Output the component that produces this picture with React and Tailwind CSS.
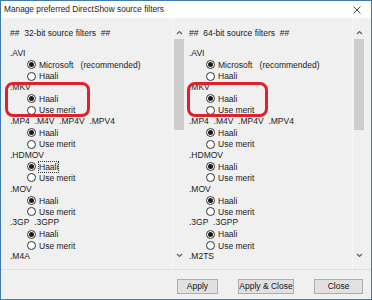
import React from "react";

const groups = [
  { ext: ".AVI", opts: [["Microsoft\u00a0\u00a0\u00a0(recommended)", true], ["Haali", false]] },
  { ext: ".MKV", opts: [["Haali", true], ["Use merit", false]] },
  { ext: ".MP4\u00a0\u00a0.M4V\u00a0\u00a0.MP4V\u00a0\u00a0.MPV4", opts: [["Haali", true], ["Use merit", false]] },
  { ext: ".HDMOV", opts: [["Haali", true, true], ["Use merit", false]] },
  { ext: ".MOV", opts: [["Haali", true], ["Use merit", false]] },
  { ext: ".3GP\u00a0\u00a0.3GPP", opts: [["Haali", true], ["Use merit", false]] },
];

function Radio({ checked }) {
  return (
    <span className="flex items-center justify-center w-[9px] h-[9px] rounded-full border border-[#333] bg-white shrink-0">
      {checked && <span className="w-[5px] h-[5px] rounded-full bg-[#1a1a1a]" />}
    </span>
  );
}

function Chevron({ up }) {
  return (
    <svg width="7" height="5" viewBox="0 0 7 5">
      <path d={up ? "M1 4 L3.5 1.5 L6 4" : "M1 1 L3.5 3.5 L6 1"} fill="none" stroke="#606060" strokeWidth="1.2" />
    </svg>
  );
}

function Scrollbar() {
  return (
    <div className="w-[13px] flex flex-col pt-[8px] pb-[7px] border-l border-[#f8f8f8]">
      <div className="h-[13px] flex items-center justify-center"><Chevron up /></div>
      <div className="flex-1 px-[1px]">
        <div className="h-[91px] bg-[#cdcdcd]" />
      </div>
      <div className="h-[13px] flex items-center justify-center"><Chevron /></div>
    </div>
  );
}

function Panel({ title, last, focus, padL }) {
  return (
    <div className="flex h-full">
      <div className={`flex-1 pt-[9px] ${padL}`}>
        <div className="h-[12px] leading-[12px] whitespace-pre">{title}</div>
        <div className="mt-[9px] flex flex-col">
          {groups.map((g, i) => (
            <React.Fragment key={i}>
              <div className="h-[11.3px] leading-[11.3px] whitespace-nowrap">{g.ext}</div>
              {g.opts.map(([label, checked, f], j) => (
                <div key={j} className="h-[11.3px] flex items-center pl-[17px] gap-[3px] whitespace-nowrap">
                  <Radio checked={checked} />
                  <span className={`leading-[10px] ${f && focus ? "outline outline-1 outline-dotted outline-[#333]" : ""}`}>{label}</span>
                </div>
              ))}
            </React.Fragment>
          ))}
          <div className="h-[11.3px] leading-[11.3px]">{last}</div>
        </div>
      </div>
      <Scrollbar />
    </div>
  );
}

function Button({ children, w }) {
  return (
    <div className={`${w} h-[15px] flex items-center justify-center bg-[#e1e1e1] border border-[#adadad] text-[#111]`}>
      {children}
    </div>
  );
}

export default function App() {
  return (
    <div className="w-[372px] h-[300px] border border-[#3d7bb0] bg-[#f0f0f0] flex flex-col text-[8.5px] text-[#1a1a1a] font-['Liberation_Sans',Arial,sans-serif] relative overflow-hidden">
      <div className="h-[17px] bg-white flex items-center justify-between pl-[3px] pr-[10px] shrink-0">
        <span className="text-[8.3px] text-[#222]">Manage preferred DirectShow source filters</span>
        <svg width="8" height="8" viewBox="0 0 8 8">
          <path d="M0.5 0.5 L7.5 7.5 M7.5 0.5 L0.5 7.5" stroke="#333" strokeWidth="0.9" />
        </svg>
      </div>
      <div className="flex h-[251px] shrink-0">
        <div className="w-[184px]">
          <Panel title={"##\u00a0\u00a032-bit source filters\u00a0\u00a0##"} last=".M4A" focus padL="pl-[9px]" />
        </div>
        <div className="w-[180px]">
          <Panel title={"##\u00a0\u00a064-bit source filters\u00a0\u00a0##"} last=".M2TS" padL="pl-[4px]" />
        </div>
      </div>
      <div className="flex-1 border-t border-[#dfdfdf] flex items-start pt-[9px] pl-[176px] gap-[20px]">
        <Button w="w-[41px]">Apply</Button>
        <Button w="w-[56px]">Apply &amp; Close</Button>
        <Button w="w-[49px]">Close</Button>
      </div>
      <div className="absolute left-[4px] top-[81px] w-[85px] h-[35px] rounded-[8px] border-[3px] border-[#e0202c]" />
      <div className="absolute left-[186px] top-[81px] w-[81px] h-[35px] rounded-[8px] border-[3px] border-[#e0202c]" />
    </div>
  );
}
